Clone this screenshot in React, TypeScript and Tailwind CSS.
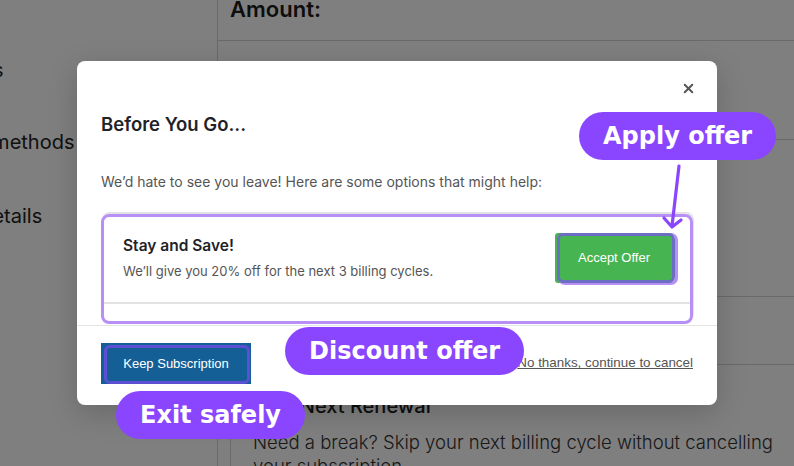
import { X } from 'lucide-react';

// ─── Callout pill ─────────────────────────────────────────────────────────────
function Callout({ label, className }: { label: string; className: string }) {
    return (
        <div
            className={`absolute flex h-12 items-center rounded-full bg-[#8a46ff] px-6 text-[24px] font-bold text-white whitespace-nowrap ${className}`}
            style={{ fontFamily: '"DejaVu Sans", Verdana, sans-serif' }}
        >
            {label}
        </div>
    );
}

// ─── Page behind the dialog ───────────────────────────────────────────────────
function BillingPage() {
    return (
        <div className="flex h-full w-full bg-white text-[#1c1c1c]" style={{ fontFamily: 'Inter, "Noto Sans", sans-serif' }}>
            <aside className="w-[218px] shrink-0 overflow-hidden border-r border-[#d4d4d4] text-[20px] leading-6 text-[#222]">
                <div className="mt-[58px] -ml-[126px] whitespace-nowrap">Subscriptions</div>
                <div className="mt-12 -ml-[96px] whitespace-nowrap">Payment methods</div>
                <div className="mt-[50px] -ml-[82px] whitespace-nowrap">Billing details</div>
            </aside>

            <main className="flex min-w-0 flex-1 flex-col">
                <div className="h-[41px] shrink-0 border-b border-[#d4d4d4] pl-3">
                    <p className="-mt-[7px] text-[22px] font-semibold leading-8">Amount:</p>
                </div>
                <div className="h-[99px] shrink-0 border-b border-[#d4d4d4]" />
                <div className="h-[157px] shrink-0 border-b border-[#d4d4d4]" />
                <div className="h-[68px] shrink-0 border-b border-[#d4d4d4]" />
                <div className="ml-3 flex-1 shrink-0 border-l border-[#d4d4d4] pl-[22px] pt-[29px]">
                    <h3 className="text-[20px] font-medium leading-6">Skip Next Renewal</h3>
                    <p className="mt-3 w-[560px] text-[18.5px] font-light leading-6 text-[#333]">
                        Need a break? Skip your next billing cycle without cancelling your subscription.
                    </p>
                </div>
            </main>
        </div>
    );
}

// ─── Cancel dialog ────────────────────────────────────────────────────────────
function RetentionDialog() {
    return (
        <div
            className="relative w-[640px] rounded-lg bg-white shadow-[0_8px_30px_rgba(0,0,0,0.18)]"
            style={{ fontFamily: 'Inter, "Noto Sans", sans-serif' }}
        >
            <button className="absolute right-[21px] top-[20px] text-[#555]">
                <X className="h-[15px] w-[15px]" strokeWidth={3.2} />
            </button>

            <div className="px-6 pt-[51px]">
                <h2 className="text-[18.5px] font-semibold leading-6 text-[#1f2328]">Before You Go...</h2>
                <p className="mt-9 text-[14px] leading-5 text-[#555]">
                    We&rsquo;d hate to see you leave! Here are some options that might help:
                </p>

                <div className="mt-[22px] rounded-lg border-[3px] border-[#b88ef7] pb-[17px] shadow-[1px_-2px_0_0_#e3e3e3]">
                    <div className="flex items-center justify-between rounded-t-md border-b-2 border-[#e2e2e2] pb-[19px] pl-[19px] pr-[17px] pt-4">
                        <div>
                            <h4 className="text-[15.5px] font-semibold leading-5 text-[#1f2328]">Stay and Save!</h4>
                            <p className="mt-[5px] text-[13px] leading-5 text-[#555]">
                                We&rsquo;ll give you 20% off for the next 3 billing cycles.
                            </p>
                        </div>
                        <button
                            className="relative flex h-[50px] w-[118px] items-center justify-center rounded-[3px] bg-[#47b452] text-[13px] text-white"
                            style={{ fontFamily: '"Liberation Sans", Arial, sans-serif' }}
                        >
                            <span className="absolute -right-[2px] bottom-0 left-[2px] top-0 rounded-md border-[3px] border-[#6c6ec3] shadow-[2px_1px_0_1px_#b88ef7]" />
                            <span className="relative">Accept Offer</span>
                        </button>
                    </div>
                </div>
            </div>

            <div className="mt-px flex items-center justify-between border-t border-[#e4e4e4] px-6 pb-[21px] pt-[17px]">
                <button
                    className="relative flex h-[41px] w-[150px] items-center justify-center bg-[#155f97] text-[13px] text-white"
                    style={{ fontFamily: '"Liberation Sans", Arial, sans-serif' }}
                >
                    <span className="absolute bottom-0 left-[3px] right-px top-[2px] rounded-md border-[3px] border-[#5b4fd4]" />
                    <span className="relative">Keep Subscription</span>
                </button>
                <a
                    className="text-[13.4px] text-[#555] underline"
                    style={{ fontFamily: '"Liberation Sans", Arial, sans-serif' }}
                >
                    No thanks, continue to cancel
                </a>
            </div>
        </div>
    );
}

export default function App() {
    return (
        <div className="relative h-[466px] w-full overflow-hidden">
            <BillingPage />

            {/* backdrop + centred dialog */}
            <div className="absolute inset-0 flex items-center justify-center bg-black/50">
                <RetentionDialog />
            </div>

            {/* annotation arrow pointing at the offer button */}
            <svg className="absolute left-[660px] top-[164px]" width="30" height="70" viewBox="0 0 30 70" fill="none">
                <path d="M19 2 L12 62" stroke="#8a46ff" strokeWidth="3.2" strokeLinecap="round" />
                <path d="M4 54 L12 63 L21 56" stroke="#8a46ff" strokeWidth="3.2" strokeLinecap="round" strokeLinejoin="round" />
            </svg>

            <Callout label="Apply offer" className="left-[579px] top-[112px]" />
            <Callout label="Discount offer" className="left-[285px] top-[327px]" />
            <Callout label="Exit safely" className="left-[116px] top-[391px]" />
        </div>
    );
}
